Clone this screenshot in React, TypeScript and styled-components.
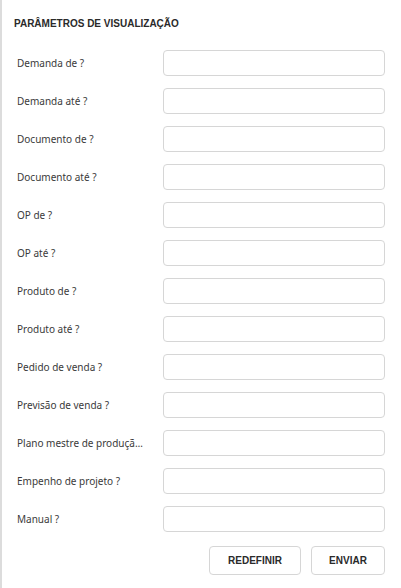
import React from "react"
import styled, { createGlobalStyle } from "styled-components"

const GlobalStyle = createGlobalStyle`
  html, body {
    margin: 0;
    padding: 0;
    background: #fff;
  }
`

const Panel = styled.div`
  box-sizing: border-box;
  width: 401px;
  height: 588px;
  border-left: 2px solid #dcdcdc;
  padding: 18px 16px 0 12px;
  display: flex;
  flex-direction: column;
`

const Title = styled.h2`
  margin: 0 0 20px 0;
  font-family: "Liberation Sans", Arial, sans-serif;
  font-size: 10px;
  font-weight: bold;
  color: #2a2a2a;
  line-height: 12px;
`

const Fields = styled.div`
  display: flex;
  flex-direction: column;
  gap: 12px;
`

const Row = styled.div`
  display: grid;
  grid-template-columns: 149px 222px;
  align-items: center;
  height: 26px;
`

const Label = styled.label`
  max-width: 126px;
  padding-left: 3px;
  font-family: "Noto Sans", "Open Sans", sans-serif;
  font-size: 10px;
  color: #3a3a3a;
  white-space: nowrap;
  overflow: hidden;
  text-overflow: ellipsis;
`

const Input = styled.input`
  box-sizing: border-box;
  width: 222px;
  height: 26px;
  border: 1px solid #d6d6d6;
  border-radius: 4px;
  background: #fff;
  outline: none;
`

const Actions = styled.div`
  display: flex;
  justify-content: flex-end;
  gap: 10px;
  margin-top: 14px;
`

const Button = styled.button<{ $w: number }>`
  box-sizing: border-box;
  width: ${(p) => p.$w}px;
  height: 29px;
  border: 1px solid #d6d6d6;
  border-radius: 4px;
  background: #fff;
  font-family: "Liberation Sans", Arial, sans-serif;
  font-size: 10px;
  font-weight: bold;
  color: #2a2a2a;
  cursor: pointer;
`

const fields = [
  "Demanda de ?",
  "Demanda até ?",
  "Documento de ?",
  "Documento até ?",
  "OP de ?",
  "OP até ?",
  "Produto de ?",
  "Produto até ?",
  "Pedido de venda ?",
  "Previsão de venda ?",
  "Plano mestre de produção ?",
  "Empenho de projeto ?",
  "Manual ?",
]

export default function App() {
  return (
    <>
      <GlobalStyle />
      <Panel>
        <Title>PARÂMETROS DE VISUALIZAÇÃO</Title>
        <Fields>
          {fields.map((f) => (
            <Row key={f}>
              <Label>{f}</Label>
              <Input type="text" />
            </Row>
          ))}
        </Fields>
        <Actions>
          <Button $w={92}>REDEFINIR</Button>
          <Button $w={74}>ENVIAR</Button>
        </Actions>
      </Panel>
    </>
  )
}
